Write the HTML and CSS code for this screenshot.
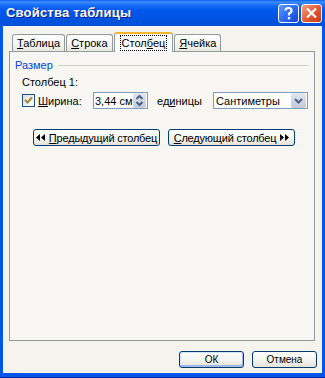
FILE: index.html
```html
<!DOCTYPE html>
<html lang="ru">
<head>
    <meta charset="UTF-8">
    <title>Свойства таблицы</title>
    <link rel="stylesheet" href="styles.css">
</head>
<body>
    <div class="window">
        <div class="titlebar">
            <span class="title">Свойства таблицы</span>
            <div class="caption-buttons">
                <div class="cap-btn help">
                    <svg width="19" height="17" viewBox="0 0 19 17">
                        <path d="M6.5 5.5 Q6.5 3 9.5 3 Q12.5 3 12.5 5.5 Q12.5 7.5 10 8.5 L10 10.5" fill="none" stroke="#fff" stroke-width="2.2"/>
                        <rect x="8.8" y="12" width="2.4" height="2.4" fill="#fff"/>
                    </svg>
                </div>
                <div class="cap-btn close">
                    <svg width="19" height="17" viewBox="0 0 19 17">
                        <path d="M5 3.5 L14 12.5 M14 3.5 L5 12.5" stroke="#fff" stroke-width="2.2"/>
                    </svg>
                </div>
            </div>
        </div>
        <div class="client">
            <div class="tabs">
                <div class="tab"><u>Т</u>аблица</div>
                <div class="tab"><u>С</u>трока</div>
                <div class="tab active"><span class="focus">Стол<u>б</u>ец</span></div>
                <div class="tab"><u>Я</u>чейка</div>
            </div>
            <div class="panel">
                <div class="group-title">
                    <span class="legend">Размер</span>
                    <span class="rule"></span>
                </div>
                <div class="row label-row">Столбец 1:</div>
                <div class="row width-row">
                    <span class="checkbox">
                        <svg width="11" height="11" viewBox="0 0 11 11">
                            <path d="M2 5 L4.5 7.5 L9 2.5" fill="none" stroke="#a68a33" stroke-width="2"/>
                        </svg>
                    </span>
                    <span class="field-label"><u>Ш</u>ирина:</span>
                    <span class="spinner">
                        <span class="spin-value">3,44 см</span>
                        <span class="spin-btns">
                            <svg width="13" height="15" viewBox="0 0 13 15">
                                <path d="M3.5 6 L6.5 3 L9.5 6" fill="none" stroke="#4d6185" stroke-width="2"/>
                                <path d="M3.5 9 L6.5 12 L9.5 9" fill="none" stroke="#4d6185" stroke-width="2"/>
                            </svg>
                        </span>
                    </span>
                    <span class="units-label">ед<u>и</u>ницы</span>
                    <span class="select">
                        <span class="select-value">Сантиметры</span>
                        <span class="select-btn">
                            <svg width="15" height="15" viewBox="0 0 15 15">
                                <path d="M4 6 L7.5 9.5 L11 6" fill="none" stroke="#4d6185" stroke-width="2"/>
                            </svg>
                        </span>
                    </span>
                </div>
                <div class="row nav-row">
                    <div class="btn nav-btn">
                        <svg width="10" height="7" viewBox="0 0 10 7">
                            <path d="M0 3.5 L4 0 L4 7 Z M5 3.5 L9 0 L9 7 Z" fill="#000"/>
                        </svg>
                        <span><u>П</u>редыдущий столбец</span>
                    </div>
                    <div class="btn nav-btn">
                        <span><u>С</u>ледующий столбец</span>
                        <svg width="10" height="7" viewBox="0 0 10 7">
                            <path d="M1 0 L5 3.5 L1 7 Z M6 0 L10 3.5 L6 7 Z" fill="#000"/>
                        </svg>
                    </div>
                </div>
            </div>
            <div class="footer">
                <div class="btn dlg-btn default">ОК</div>
                <div class="btn dlg-btn">Отмена</div>
            </div>
        </div>
    </div>
</body>
</html>
```

FILE: styles.css
```css
body {
    margin: 0;
    padding: 0;
    font-family: "Liberation Sans", Arial, sans-serif;
    font-size: 11px;
    color: #000;
}
.window {
    width: 325px;
    height: 378px;
    display: flex;
    flex-direction: column;
    background: #0055ea;
    box-sizing: border-box;
    border-bottom: 1px solid #001ea0;
}
.titlebar {
    height: 26px;
    flex-shrink: 0;
    display: flex;
    align-items: center;
    justify-content: space-between;
    padding: 0 3px 0 6px;
    background: linear-gradient(to bottom, #0a5cf0 0, #3d8ffb 2px, #1a6ef9 5px, #0058ee 10px, #0054e3 18px, #0050d8 26px);
}
.title {
    color: #fff;
    font-weight: bold;
    font-size: 13px;
    letter-spacing: 0.2px;
    text-shadow: 1px 1px 0 #0a1e8c;
    padding-bottom: 1px;
}
.caption-buttons {
    display: flex;
    gap: 2px;
    padding-top: 1px;
}
.cap-btn {
    width: 19px;
    height: 17px;
    border: 1px solid #fff;
    border-radius: 3px;
    display: flex;
}
.help {
    background: linear-gradient(135deg, #5b9cff 0, #2a6cf5 50%, #1446d0 100%);
}
.close {
    background: linear-gradient(135deg, #f2a283 0, #e35c34 50%, #c23a14 100%);
}
.client {
    flex: 1;
    margin: 0 3px 4px;
    background: #f4f3ee;
    padding: 6px 7px 0 6px;
    display: flex;
    flex-direction: column;
}
.tabs {
    display: flex;
    align-items: flex-end;
    height: 19px;
    flex-shrink: 0;
    padding-left: 3px;
    position: relative;
    z-index: 1;
}
.tab {
    height: 15px;
    padding: 1px 4px 0;
    margin-right: 1px;
    border: 1px solid #919b9c;
    border-bottom: none;
    border-radius: 3px 3px 0 0;
    background: linear-gradient(to bottom, #fff 0, #f4f4f0 60%, #e8e8e0 100%);
    line-height: 14px;
    white-space: nowrap;
}
.tab.active {
    height: 18px;
    margin-bottom: -1px;
    padding: 0 6px;
    border-top: 2px solid #f5b530;
    background: #fcfcfe;
    line-height: 19px;
}
.focus {
    outline: 1px dotted #000;
    padding: 0 1px;
    line-height: 14px;
    display: inline-block;
}
.panel {
    height: 290px;
    flex-shrink: 0;
    box-sizing: border-box;
    border: 1px solid #919b9c;
    background: #f7f6f2;
    padding: 6px 6px 0 5px;
    display: flex;
    flex-direction: column;
}
.group-title {
    display: flex;
    align-items: center;
    height: 13px;
}
.legend {
    color: #0046d5;
}
.rule {
    flex: 1;
    height: 1px;
    margin-left: 5px;
    margin-top: 2px;
    background: #d0d0bf;
}
.row {
    display: flex;
    align-items: center;
    white-space: nowrap;
}
.label-row {
    margin: 3px 0 0 7px;
    height: 15px;
}
.width-row {
    margin: 3px 0 0 7px;
    height: 17px;
}
.checkbox {
    width: 11px;
    height: 11px;
    border: 1px solid #1c5180;
    background: linear-gradient(135deg, #dcdcd7 0, #fff 100%);
    display: flex;
}
.field-label {
    margin-left: 3px;
    width: 55px;
}
.spinner {
    width: 53px;
    height: 15px;
    border: 1px solid #7f9db9;
    background: #fff;
    display: flex;
    align-items: center;
    justify-content: space-between;
}
.spin-value {
    padding-left: 1px;
}
.spin-btns {
    width: 13px;
    height: 15px;
    margin-right: 1px;
    background: linear-gradient(to bottom, #dfe6f2 0, #c3cbd9 100%);
    border-radius: 2px;
    display: flex;
}
.units-label {
    margin-left: 9px;
    width: 56px;
}
.select {
    width: 93px;
    height: 15px;
    border: 1px solid #7f9db9;
    background: #fff;
    display: flex;
    align-items: center;
    justify-content: space-between;
}
.select-value {
    padding-left: 2px;
}
.select-btn {
    width: 15px;
    height: 15px;
    margin-right: 1px;
    background: linear-gradient(to bottom, #e2e8f2 0, #c1c9d6 100%);
    border-radius: 2px;
    display: flex;
}
.nav-row {
    margin: 20px 0 0 18px;
    gap: 8px;
}
.btn {
    height: 15px;
    border: 1px solid #003c74;
    border-radius: 3px;
    background: linear-gradient(to bottom, #fff 0, #f5f5f1 50%, #e3e3db 100%);
    display: flex;
    align-items: center;
    justify-content: center;
    white-space: nowrap;
}
.nav-btn {
    width: 125px;
    gap: 3px;
    letter-spacing: -0.2px;
}
.footer {
    display: flex;
    justify-content: flex-end;
    gap: 8px;
    margin-top: 10px;
    margin-right: -2px;
}
.dlg-btn {
    width: 63px;
    font-size: 10px;
}
.default {
    box-shadow: inset -1px -2px 0 #a0b8ee, inset 1px 1px 0 #cee7ff;
}
```
